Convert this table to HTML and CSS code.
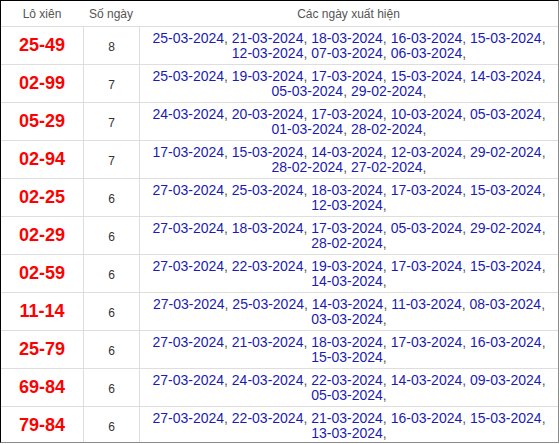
FILE: index.html
```html
<!DOCTYPE html>
<html lang="vi">
<head>
<meta charset="utf-8">
<title>Lô xiên</title>
<link rel="stylesheet" href="styles.css">
</head>
<body>
<div class="frame">
  <div class="grid">
    <div class="th">Lô xiên</div>
    <div class="th">Số ngày</div>
    <div class="th">Các ngày xuất hiện</div>

    <div class="cell pair">25-49</div>
    <div class="cell count">8</div>
    <div class="cell dates"><p><span class="d">25-03-2024</span>, <span class="d">21-03-2024</span>, <span class="d">18-03-2024</span>, <span class="d">16-03-2024</span>, <span class="d">15-03-2024</span>, <span class="d">12-03-2024</span>, <span class="d">07-03-2024</span>, <span class="d">06-03-2024</span>,</p></div>

    <div class="cell pair">02-99</div>
    <div class="cell count">7</div>
    <div class="cell dates"><p><span class="d">25-03-2024</span>, <span class="d">19-03-2024</span>, <span class="d">17-03-2024</span>, <span class="d">15-03-2024</span>, <span class="d">14-03-2024</span>, <span class="d">05-03-2024</span>, <span class="d">29-02-2024</span>,</p></div>

    <div class="cell pair">05-29</div>
    <div class="cell count">7</div>
    <div class="cell dates"><p><span class="d">24-03-2024</span>, <span class="d">20-03-2024</span>, <span class="d">17-03-2024</span>, <span class="d">10-03-2024</span>, <span class="d">05-03-2024</span>, <span class="d">01-03-2024</span>, <span class="d">28-02-2024</span>,</p></div>

    <div class="cell pair">02-94</div>
    <div class="cell count">7</div>
    <div class="cell dates"><p><span class="d">17-03-2024</span>, <span class="d">15-03-2024</span>, <span class="d">14-03-2024</span>, <span class="d">12-03-2024</span>, <span class="d">29-02-2024</span>, <span class="d">28-02-2024</span>, <span class="d">27-02-2024</span>,</p></div>

    <div class="cell pair">02-25</div>
    <div class="cell count">6</div>
    <div class="cell dates"><p><span class="d">27-03-2024</span>, <span class="d">25-03-2024</span>, <span class="d">18-03-2024</span>, <span class="d">17-03-2024</span>, <span class="d">15-03-2024</span>, <span class="d">12-03-2024</span>,</p></div>

    <div class="cell pair">02-29</div>
    <div class="cell count">6</div>
    <div class="cell dates"><p><span class="d">27-03-2024</span>, <span class="d">18-03-2024</span>, <span class="d">17-03-2024</span>, <span class="d">05-03-2024</span>, <span class="d">29-02-2024</span>, <span class="d">28-02-2024</span>,</p></div>

    <div class="cell pair">02-59</div>
    <div class="cell count">6</div>
    <div class="cell dates"><p><span class="d">27-03-2024</span>, <span class="d">22-03-2024</span>, <span class="d">19-03-2024</span>, <span class="d">17-03-2024</span>, <span class="d">15-03-2024</span>, <span class="d">14-03-2024</span>,</p></div>

    <div class="cell pair">11-14</div>
    <div class="cell count">6</div>
    <div class="cell dates"><p><span class="d">27-03-2024</span>, <span class="d">25-03-2024</span>, <span class="d">14-03-2024</span>, <span class="d">11-03-2024</span>, <span class="d">08-03-2024</span>, <span class="d">03-03-2024</span>,</p></div>

    <div class="cell pair">25-79</div>
    <div class="cell count">6</div>
    <div class="cell dates"><p><span class="d">27-03-2024</span>, <span class="d">21-03-2024</span>, <span class="d">18-03-2024</span>, <span class="d">17-03-2024</span>, <span class="d">16-03-2024</span>, <span class="d">15-03-2024</span>,</p></div>

    <div class="cell pair">69-84</div>
    <div class="cell count">6</div>
    <div class="cell dates"><p><span class="d">27-03-2024</span>, <span class="d">24-03-2024</span>, <span class="d">22-03-2024</span>, <span class="d">14-03-2024</span>, <span class="d">09-03-2024</span>, <span class="d">05-03-2024</span>,</p></div>

    <div class="cell pair">79-84</div>
    <div class="cell count">6</div>
    <div class="cell dates"><p><span class="d">27-03-2024</span>, <span class="d">22-03-2024</span>, <span class="d">21-03-2024</span>, <span class="d">16-03-2024</span>, <span class="d">15-03-2024</span>, <span class="d">13-03-2024</span>,</p></div>
  </div>
</div>
</body>
</html>
```

FILE: styles.css
```css
html, body {
  margin: 0;
  padding: 0;
  background: #fff;
}

body {
  font-family: "Liberation Sans", Arial, sans-serif;
  color: #333;
}

.frame {
  box-sizing: border-box;
  width: 559px;
  height: 443px;
  overflow: hidden;
  border-top: 1px solid #000;
  border-left: 1px solid #000;
  border-right: 1px solid #8a8a8a;
  border-bottom: 1px solid #8a8a8a;
}

.grid {
  display: grid;
  grid-template-columns: 82px 56px 1fr;
  grid-template-rows: 26px;
  grid-auto-rows: 38px;
}

.th,
.cell {
  box-sizing: border-box;
  display: flex;
  align-items: center;
  justify-content: center;
  text-align: center;
  border-bottom: 1px solid #dedede;
}

.th {
  font-size: 12px;
  color: #555;
}

.count,
.dates {
  border-left: 1px solid #dedede;
}

.pair {
  font-size: 18px;
  font-weight: bold;
  color: #f00;
}

.count {
  font-size: 12px;
  color: #333;
  padding-top: 2px;
}

.dates {
  font-size: 14px;
  line-height: 15px;
  color: #555;
  padding: 0 4px;
}

.dates p {
  margin: 0;
}

.d {
  color: #1b1bb3;
}
```
